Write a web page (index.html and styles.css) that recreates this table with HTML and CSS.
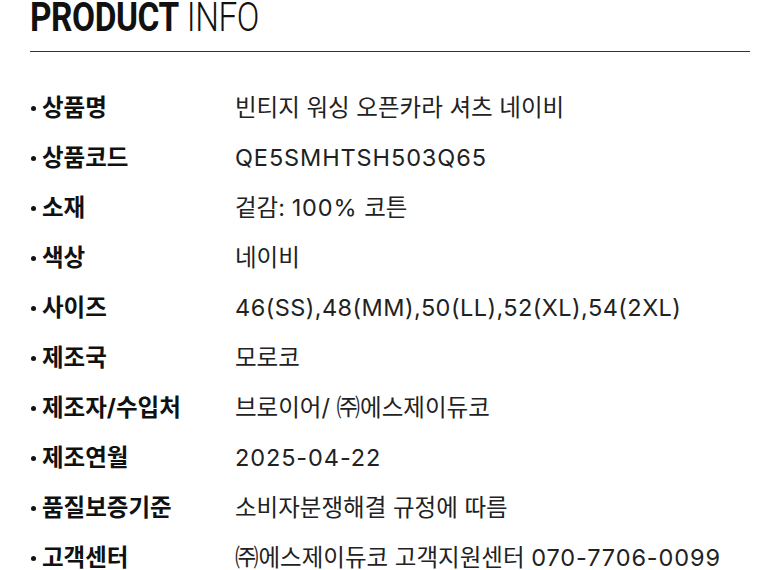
FILE: index.html
```html
<!DOCTYPE html>
<html lang="ko">
<head>
<meta charset="utf-8">
<link rel="stylesheet" href="styles.css">
</head>
<body>
<section class="info">
  <h2 class="title"><span class="t-inner"><b>PRODUCT</b> <span class="light">INFO</span></span></h2>
  <ul class="rows">
    <li><span class="label">상품명</span><span class="value">빈티지 워싱 오픈카라 셔츠 네이비</span></li>
    <li><span class="label">상품코드</span><span class="value"><span class="num">QE5SMHTSH503Q65</span></span></li>
    <li><span class="label">소재</span><span class="value">겉감: <span class="num">100%</span> 코튼</span></li>
    <li><span class="label">색상</span><span class="value">네이비</span></li>
    <li><span class="label">사이즈</span><span class="value"><span class="num sizes">46(SS),48(MM),50(LL),52(XL),54(2XL)</span></span></li>
    <li><span class="label">제조국</span><span class="value">모로코</span></li>
    <li><span class="label">제조자/수입처</span><span class="value">브로이어/ ㈜에스제이듀코</span></li>
    <li><span class="label">제조연월</span><span class="value"><span class="num">2025-04-22</span></span></li>
    <li><span class="label">품질보증기준</span><span class="value">소비자분쟁해결 규정에 따름</span></li>
    <li><span class="label">고객센터</span><span class="value">㈜에스제이듀코 고객지원센터 <span class="num">070-7706-0099</span></span></li>
  </ul>
</section>
</body>
</html>
```

FILE: styles.css
```css
html, body {
  margin: 0;
  padding: 0;
  background: #fff;
}
body {
  font-family: "Inter", "Noto Sans CJK KR", sans-serif;
  color: #111;
}
.info {
  padding: 0 30px;
}
.title {
  margin: 0;
  height: 52px;
  box-sizing: border-box;
  border-bottom: 1px solid #333;
  font-family: "Roboto", sans-serif;
  font-size: 40px;
  line-height: 36px;
  font-weight: 400;
  color: #111;
}
.t-inner {
  display: inline-block;
  transform: scaleX(0.835);
  transform-origin: left center;
  white-space: nowrap;
  letter-spacing: -0.5px;
}
.title b {
  font-weight: 700;
}
.title .light {
  font-weight: 300;
}
.rows {
  list-style: none;
  margin: 31px 0 0;
  padding: 0;
}
.rows li {
  display: grid;
  grid-template-columns: 205px 1fr;
  height: 50px;
  align-items: center;
  font-size: 23.5px;
  line-height: 28px;
}
.label {
  font-weight: 700;
  position: relative;
  padding-left: 12px;
}
.label::before {
  content: "";
  position: absolute;
  left: 1px;
  top: 50%;
  width: 5px;
  height: 5px;
  margin-top: -2px;
  border-radius: 50%;
  background: #111;
}
.value {
  font-weight: 400;
  color: #222;
}
.num {
  letter-spacing: 0.9px;
}
.num.sizes {
  letter-spacing: 0.45px;
}
```
